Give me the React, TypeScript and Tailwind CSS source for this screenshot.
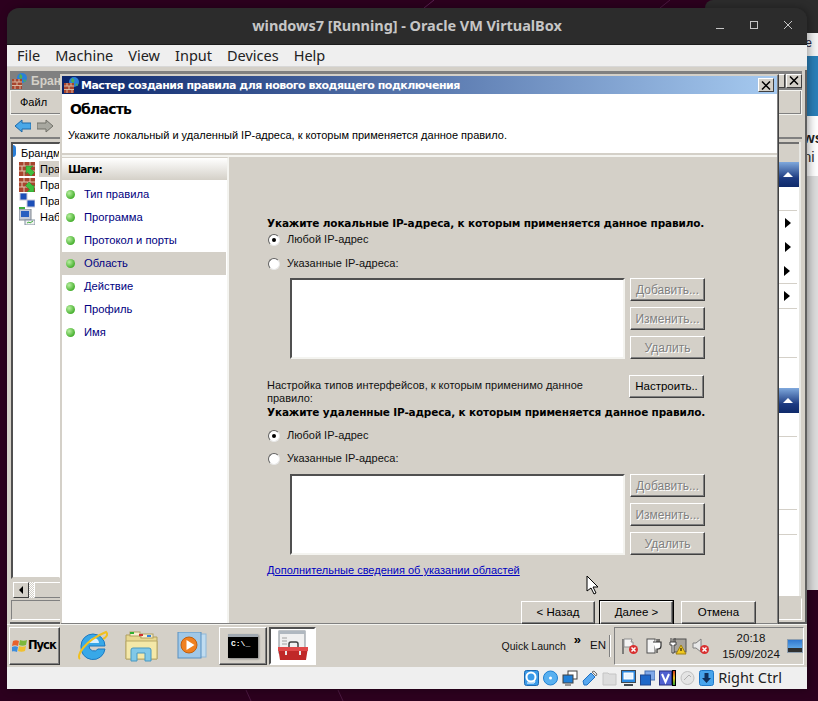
import React from "react";

const tahoma = "font-['Liberation_Sans','Noto_Sans',sans-serif]";

// кнопка в стиле Windows Classic
const Btn = ({ children, disabled, def, className = "" }: { children: React.ReactNode; disabled?: boolean; def?: boolean; className?: string }) => (
  <div
    className={`h-[23px] flex items-center justify-center bg-[#d4d0c8] border border-t-white border-l-white border-r-[#404040] border-b-[#404040] shadow-[inset_-1px_-1px_0_#808080] ${
      disabled ? "text-[12px] text-[#808080] [text-shadow:1px_1px_0_#fff]" : "text-[11.500px] text-black"
    } ${def ? "outline outline-1 outline-black" : ""} ${className}`}
  >
    {children}
  </div>
);

const Radio = ({ checked, label }: { checked?: boolean; label: string }) => (
  <div className="flex items-center h-[13px] gap-[7px] ml-[1px]">
    <div className="w-[12px] h-[12px] rounded-full bg-white border border-t-[#606060] border-l-[#606060] border-r-[#e8e8e8] border-b-[#e8e8e8] flex items-center justify-center">
      {checked && <div className="w-[4px] h-[4px] rounded-full bg-black" />}
    </div>
    <span className="text-[11px] text-[#111] leading-none">{label}</span>
  </div>
);

const Bricks = ({ down }: { down?: boolean }) => (
  <svg width="16" height="14" viewBox="0 0 16 14" className="shrink-0">
    <rect width="16" height="14" fill="#a8452e" />
    <path d="M0 4h16M0 9h16M5 0v4M11 0v4M3 4v5M9 4v5M5 9v5M12 9v5" stroke="#e0c8b0" strokeWidth="1" />
    <path d={down ? "M15 14H8l2.500-2.500-4-4L10 4l4 4 1-1z" : "M7 4h7l-2.500 2.500 4 4-3.500 3.500-4-4L7 12z"} fill="#3fbf3f" stroke="#2a8a2a" strokeWidth="0.500" />
  </svg>
);

const Net = () => (
  <svg width="16" height="16" viewBox="0 0 16 16" className="shrink-0">
    <rect x="1" y="0" width="7" height="7" fill="#1c4fb8" stroke="#c8c8d8" />
    <rect x="8" y="7" width="8" height="7" fill="#1c4fb8" stroke="#c8c8d8" />
    <path d="M0 14h6v2H0z" fill="#3fae3f" />
  </svg>
);

const Monitor = () => (
  <svg width="16" height="16" viewBox="0 0 16 16" className="shrink-0">
    <rect x="0" y="0" width="12" height="11" fill="#c8ccd8" stroke="#808890" />
    <rect x="2" y="2" width="8" height="6" fill="#2a5fc0" />
    <rect x="6" y="11" width="10" height="5" fill="#f0f0f0" stroke="#8090a0" />
    <path d="M8 14l2-1 1 1 3-2" stroke="#3fae3f" fill="none" />
  </svg>
);

const Globe = ({ size = 16 }: { size?: number }) => (
  <svg width={size} height={size} viewBox="0 0 16 16" className="shrink-0">
    <circle cx="10" cy="5" r="5" fill="#2b7fd8" />
    <path d="M8 1c2 1 3 2 2 4s-2 0-3-1zM13 6l1 3-3-1z" fill="#4fb04f" />
    <rect x="0" y="6" width="10" height="10" fill="#a8452e" />
    <path d="M0 9h10M0 12.500h10M3 6v3M7 6v3M5 9v3.500M3 12.500V16M8 12.500V16" stroke="#d8b8a0" />
  </svg>
);

const StepDot = () => (
  <div className="w-[9px] h-[9px] rounded-full bg-[radial-gradient(circle_at_35%_35%,#b8f0a0,#48b030_70%)]" />
);

const Step = ({ label, active }: { label: string; active?: boolean }) => (
  <div className={`h-[23px] flex items-center pl-[4px] gap-[9px] ${active ? "bg-[#d4d0c8] mr-[1px]" : ""}`}>
    <StepDot />
    <span className="text-[11.200px] text-[#000080] leading-none">{label}</span>
  </div>
);

const AddressBlock = () => (
  <div className="flex ml-[23px] gap-[5px]">
    <div className="w-[335px] h-[81px] bg-white border-2 border-t-[#505050] border-l-[#505050] border-r-[#f4f4f0] border-b-[#f4f4f0]" />
    <div className="flex flex-col gap-[6px]">
      <Btn disabled className="w-[75px]">Добавить...</Btn>
      <Btn disabled className="w-[75px]">Изменить...</Btn>
      <Btn disabled className="w-[75px]">Удалить</Btn>
    </div>
  </div>
);

const Tri = () => <div className="w-0 h-0 border-y-[5px] border-y-transparent border-l-[6px] border-l-black" />;

const BlueHead = ({ className = "" }: { className?: string }) => (
  <div className={`h-[25px] shrink-0 flex items-center justify-center bg-[linear-gradient(#7fa8dc,#1c3a80_65%,#0f2a6a)] ${className}`}>
    <div className="w-0 h-0 border-x-[5px] border-x-transparent border-b-[5px] border-b-white" />
  </div>
);

const Wizard = () => (
  <div className="absolute left-[53px] top-[7px] w-[719px] h-[551px] flex flex-col bg-[#d4d0c8] border border-t-[#d4d0c8] border-l-[#d4d0c8] border-r-[#404040] border-b-[#404040] p-[1px] shadow-[inset_-1px_-1px_0_#808080]">
    <div className="h-[18px] shrink-0 flex items-center pl-[2px] pr-[3px] bg-[linear-gradient(90deg,#0a246a,#a6caf0)]">
      <Globe size={16} />
      <span className="ml-[1px] text-[11px] font-bold text-white font-['DejaVu_Sans',sans-serif] tracking-[-0.5px] leading-none">Мастер создания правила для нового входящего подключения</span>
      <div className="ml-auto w-[16px] h-[14px] bg-[#d4d0c8] border border-t-white border-l-white border-r-[#404040] border-b-[#404040] flex items-center justify-center">
        <svg width="10" height="9" viewBox="0 0 10 9"><path d="M1 0.500l8 8M9 0.500l-8 8" stroke="#000" strokeWidth="1.500" /></svg>
      </div>
    </div>
    <div className="h-[61px] shrink-0 bg-white pl-[6px] border-b-2 border-b-[#d4d0c8]">
      <div className="mt-[6px] ml-[2px] text-[14px] leading-[18px] font-bold text-black font-['DejaVu_Sans',sans-serif] tracking-[-0.8px]">Область</div>
      <div className="mt-[10px] text-[11px] leading-[14px] text-black">Укажите локальный и удаленный IP-адреса, к которым применяется данное правило.</div>
    </div>
    <div className="flex flex-1 min-h-0 border-t-2 border-t-[#f4f4f0]">
      <div className="w-[167px] shrink-0 bg-white flex flex-col border-r-2 border-r-[#f4f4f0] border-t border-t-[#d4d0c8]">
        <div className="h-[22px] pl-[6px] pt-[1px] flex items-center bg-[linear-gradient(#fff,#d4d0c8)] text-[10.500px] font-bold text-black font-['DejaVu_Sans',sans-serif] tracking-[-0.6px]">Шаги:</div>
        <div className="flex flex-col pt-[3px]">
          <Step label="Тип правила" />
          <Step label="Программа" />
          <Step label="Протокол и порты" />
          <Step label="Область" active />
          <Step label="Действие" />
          <Step label="Профиль" />
          <Step label="Имя" />
        </div>
      </div>
      <div className="relative flex-1 pl-[38px] pt-[59px] flex flex-col">
        <div className="text-[10.500px] leading-[14px] font-bold text-black font-['DejaVu_Sans',sans-serif] tracking-[-0.15px]">Укажите локальные IP-адреса, к которым применяется данное правило.</div>
        <div className="mt-[3px]"><Radio checked label="Любой IP-адрес" /></div>
        <div className="mt-[11px]"><Radio label="Указанные IP-адреса:" /></div>
        <div className="mt-[8px]"><AddressBlock /></div>
        <div className="flex h-[26px] mt-[16px] justify-between w-[437px]">
          <div className="w-[345px] text-[11px] leading-[13px] text-[#111] pt-[4px]">Настройка типов интерфейсов, к которым применимо данное правило:</div>
          <Btn className="w-[75px]">Настроить..</Btn>
        </div>
        <div className="mt-[4px] text-[10.500px] leading-[14px] font-bold text-black font-['DejaVu_Sans',sans-serif] tracking-[-0.15px]">Укажите удаленные IP-адреса, к которым применяется данное правило.</div>
        <div className="mt-[10px]"><Radio checked label="Любой IP-адрес" /></div>
        <div className="mt-[10px]"><Radio label="Указанные IP-адреса:" /></div>
        <div className="mt-[9px]"><AddressBlock /></div>
        <div className="mt-[8px] text-[11px] leading-[14px] text-[#0000c0] underline">Дополнительные сведения об указании областей</div>
        <div className="flex justify-end mt-[24px] pr-[21px]">
          <Btn className="w-[74px]">&lt; Назад</Btn>
          <Btn def className="w-[73px] ml-[5px] mr-[8px]">Далее &gt;</Btn>
          <Btn className="w-[75px]">Отмена</Btn>
        </div>
      </div>
    </div>
  </div>
);

// окно консоли позади мастера
const Mmc = () => (
  <div className="flex-1 min-h-0 pl-[3px] pt-[3px]">
    <div className="h-full flex flex-col border-r-2 border-r-[#606060] border-b-2 border-b-[#606060] pr-[3px]">
      <div className="h-[19px] shrink-0 flex items-center pl-[2px] bg-[#808080] mt-[1px]">
        <Globe />
        <span className="ml-[3px] text-[12px] font-bold text-[#d4d0c8]">Бран</span>
        <div className="ml-auto flex gap-[1px]">
          <div className="w-[16px] h-[14px] bg-[#d4d0c8] border border-t-white border-l-white border-r-[#404040] border-b-[#404040]" />
          <div className="w-[16px] h-[14px] bg-[#d4d0c8] border border-t-white border-l-white border-r-[#404040] border-b-[#404040] flex items-center justify-center">
            <svg width="10" height="9" viewBox="0 0 10 9"><path d="M1 0.500l8 8M9 0.500l-8 8" stroke="#000" strokeWidth="1.500" /></svg>
          </div>
        </div>
      </div>
      <div className="h-[25px] shrink-0 flex items-center pl-[9px] border border-[#f4f4f0] shadow-[inset_-1px_-1px_0_#808080] text-[11px] text-black">Файл</div>
      <div className="h-[24px] shrink-0 flex items-center pl-[5px] gap-[6px] border-b-2 border-b-[#808080]">
        <svg width="16" height="14" viewBox="0 0 16 14"><path d="M0 7l7-6v3h9v6H7v3z" fill="#4aa8e8" stroke="#1c68a8" /></svg>
        <svg width="16" height="14" viewBox="0 0 16 14"><path d="M16 7L9 1v3H0v6h9v3z" fill="#a8a8a0" stroke="#707068" /></svg>
      </div>
      <div className="flex flex-1 min-h-0 mt-[3px] ml-[1px] justify-between">
        <div className="w-[50px] flex flex-col">
          <div className="relative flex-1 bg-white border-2 border-t-[#505050] border-l-[#505050] border-r-white border-b-[#d4d0c8] pl-[1px] pt-[1px] text-[11px] text-black overflow-hidden">
            <div className="absolute left-[-4px] top-[1px] w-[7px] h-[12px] rounded-full bg-[#2b7fd8]" />
            <div className="flex items-center h-[16px] whitespace-nowrap pl-[7px]">Брандм</div>
            <div className="flex items-center h-[16px] pl-[5px] gap-[4px] whitespace-nowrap"><Bricks /><span className="bg-[#d4d0c8] px-[1px]">Пра</span></div>
            <div className="flex items-center h-[16px] pl-[5px] gap-[5px] whitespace-nowrap"><Bricks down /><span>Пра</span></div>
            <div className="flex items-center h-[16px] pl-[5px] gap-[5px] whitespace-nowrap"><Net /><span>Пра</span></div>
            <div className="flex items-center h-[16px] pl-[5px] gap-[5px] whitespace-nowrap"><Monitor /><span>Наб</span></div>
          </div>
          <div className="h-[21px] shrink-0 flex items-center bg-[#d4d0c8]">
            <div className="w-[16px] h-[16px] ml-[2px] flex items-center justify-center border border-t-white border-l-white border-r-[#404040] border-b-[#404040]">
              <div className="w-0 h-0 border-y-[4px] border-y-transparent border-r-[4px] border-r-black" />
            </div>
            <div className="w-[5px] h-[16px] bg-[repeating-conic-gradient(#fff_0_25%,#d4d0c8_0_50%)] bg-[length:2px_2px]" />
            <div className="flex-1 h-[16px] border border-t-white border-l-white border-b-[#808080]" />
          </div>
          <div className="h-[20px] shrink-0 mb-[2px] border border-t-[#808080] border-l-[#808080] border-b-white" />
        </div>
        <div className="w-[26px] flex flex-col">
          <div className="flex-1 bg-white border-r-2 border-r-[#e8e8e4] mr-[1px] flex flex-col">
            <div className="h-[20px] shrink-0 bg-[#d4d0c8] border-t-2 border-t-[#707070]" />
            <BlueHead />
            <div className="h-[24px] shrink-0 border-b border-b-[#d4d0c8] mr-[2px]" />
            <div className="h-[24px] shrink-0 flex items-center justify-center"><Tri /></div>
            <div className="h-[24px] shrink-0 flex items-center justify-center"><Tri /></div>
            <div className="h-[25px] shrink-0 flex items-center justify-center border-b border-b-[#d4d0c8] mr-[2px]"><Tri /></div>
            <div className="h-[25px] shrink-0 flex items-center justify-center border-b border-b-[#d4d0c8] mr-[2px]"><Tri /></div>
            <div className="h-[49px] shrink-0 border-b border-b-[#d4d0c8] mr-[2px]" />
            <div className="h-[30px] shrink-0" />
            <BlueHead />
            <div className="h-[24px] shrink-0 border-b border-b-[#d4d0c8] mr-[2px]" />
            <div className="h-[73px] shrink-0 border-b border-b-[#d4d0c8] mr-[2px]" />
            <div className="h-[25px] shrink-0 border-b border-b-[#d4d0c8] mr-[2px]" />
          </div>
          <div className="h-[22px] shrink-0 mt-[2px] mb-[2px] border border-r-white border-b-white border-t-[#d4d0c8] border-l-[#d4d0c8]" />
        </div>
      </div>
    </div>
  </div>
);

const TrayIcon = ({ children, w = 18 }: { children: React.ReactNode; w?: number }) => (
  <svg width={w} height="18" viewBox="0 0 18 18" className="shrink-0">{children}</svg>
);

const ErrBadge = () => (
  <>
    <circle cx="12.500" cy="12.500" r="4.500" fill="#d83030" />
    <path d="M10.500 10.500l4 4M14.500 10.500l-4 4" stroke="#fff" strokeWidth="1.500" />
  </>
);

const Taskbar = () => (
  <div className="h-[43px] shrink-0 flex items-center border-t border-t-[#f4f4f0] pl-[2px] relative">
    <div className="w-[51px] h-[38px] flex items-center pl-[2px] bg-[#d4d0c8] border border-t-white border-l-white border-r-[#404040] border-b-[#404040] shadow-[inset_-1px_-1px_0_#808080]">
      <svg width="16" height="14" viewBox="0 0 16 14" className="shrink-0">
        <path d="M1 2c2-1 4-1 6 0l-1 5c-2-1-4-1-6 0z" fill="#e8622c" />
        <path d="M8 1c2 1 5 1 7 0l-1 5c-2 1-5 1-7 0z" fill="#7cb83c" />
        <path d="M0 8c2-1 4-1 6 0l-1 5c-2-1-4-1-6 0z" fill="#3c8cdc" />
        <path d="M7 7c2 1 5 1 7 0l-1 5c-2 1-5 1-7 0z" fill="#f0c030" />
      </svg>
      <span className="text-[11.500px] font-bold text-black font-['DejaVu_Sans',sans-serif] tracking-[-1px]">Пуск</span>
    </div>
    <svg width="32" height="32" viewBox="0 0 32 32" className="ml-[16px] shrink-0">
      <path d="M5 16a12 12 0 1 1 24 0H13a5 5 0 0 0 9 3h7a12 12 0 0 1-24-3z" fill="#38a8e8" stroke="#1c78c0" />
      <path d="M13 13h10a5 5 0 0 0-10 0z" fill="#d8f0ff" />
      <path d="M4 29c-4-3 4-18 26-27 3 3-1 6-3 7" fill="none" stroke="#f0c020" strokeWidth="2" />
    </svg>
    <svg width="34" height="32" viewBox="0 0 34 32" className="ml-[17px] shrink-0">
      <path d="M1 5h12l2 2h17v22H1z" fill="#e8d890" stroke="#b0a060" />
      <rect x="5" y="2" width="10" height="4" fill="#f8f0d0" stroke="#b0a060" />
      <rect x="16" y="4" width="12" height="4" fill="#f8f0d0" stroke="#b0a060" />
      <path d="M5 2h4v2H5z" fill="#30b030" /><path d="M14 4h4v2h-4z" fill="#d03030" /><path d="M22 5h4v2h-4z" fill="#3080e0" />
      <path d="M1 11h31v18H1z" fill="#f4e8a8" stroke="#b8a868" />
      <path d="M6 31V20a2 2 0 0 1 2-2h16a2 2 0 0 1 2 2v11h-6v-8h-8v8z" fill="#80c8e8" stroke="#4898c0" />
    </svg>
    <svg width="32" height="28" viewBox="0 0 32 28" className="ml-[18px] shrink-0">
      <rect x="8" y="2" width="21" height="23" fill="#c0dcf0" stroke="#90b8d8" />
      <rect x="1" y="0" width="23" height="26" fill="#a0c8e8" stroke="#5890c0" />
      <circle cx="12" cy="13" r="8" fill="#f08020" stroke="#c06010" />
      <path d="M9.500 8l8 5-8 5z" fill="#fff" />
    </svg>
    <div className="ml-[10px] w-[48px] h-[38px] flex items-center justify-center bg-[#d4d0c8] border border-t-white border-l-white border-r-[#404040] border-b-[#404040] shadow-[inset_-1px_-1px_0_#808080]">
      <div className="w-[30px] h-[24px] bg-black border-t-[3px] border-t-[#a0a8b0] shadow-[1px_1px_2px_#808080] pl-[3px] pt-[3px] text-[8px] leading-none text-white font-['Liberation_Mono',monospace] font-bold">C:\_</div>
    </div>
    <div className="ml-[2px] w-[47px] h-[38px] flex items-center justify-center bg-white border-2 border-t-[#505050] border-l-[#505050] border-r-white border-b-white">
      <svg width="34" height="32" viewBox="0 0 34 32">
        <rect x="3" y="1" width="26" height="22" fill="#f0f0f0" stroke="#808890" />
        <rect x="3" y="1" width="26" height="3" fill="#b0b8c0" />
        <path d="M6 8h5M6 11h5M6 14h5" stroke="#a0a0a0" />
        <path d="M13 17v-3a2 2 0 0 1 2-2h5a2 2 0 0 1 2 2v3" fill="none" stroke="#404040" strokeWidth="1.500" />
        <path d="M2 17h30l-2 13H4z" fill="#c02828" />
        <path d="M2 17h30v4H2z" fill="#e04848" />
        <rect x="9" y="21" width="2" height="4" fill="#e8e8e8" /><rect x="23" y="21" width="2" height="4" fill="#e8e8e8" />
      </svg>
    </div>
    <div className="ml-auto flex items-center h-full">
      <span className="text-[10.500px] text-[#111] mt-[1px] mr-[8px]">Quick Launch</span>
      <span className="text-[13px] font-bold text-black -mt-[14px] mr-[9px] leading-none">»</span>
      <span className="text-[11.500px] text-[#111] mr-[3px]">EN</span>
      <div className="w-[2px] h-[22px] bg-[#808080] border-r border-r-white mr-[3px]" />
      <div className="w-[190px] h-[38px] mr-[3px] flex items-center pl-[6px] border border-t-[#808080] border-l-[#808080] border-r-white border-b-white">
        <TrayIcon w={18}>
          <path d="M2 2v15" stroke="#606060" strokeWidth="1.500" /><path d="M3 2h8l-1 3h2v5H3z" fill="#f4f4f4" stroke="#909090" /><ErrBadge />
        </TrayIcon>
        <div className="ml-[6px]">
          <TrayIcon>
            <rect x="2" y="2" width="8" height="14" fill="#f4f4f4" stroke="#505050" /><path d="M9 5h3V2M14 5V2M8 5h8v4a3 3 0 0 1-3 3h-1v4" fill="#fff" stroke="#303030" strokeWidth="1.200" />
          </TrayIcon>
        </div>
        <div className="ml-[6px]">
          <TrayIcon>
            <rect x="4" y="2" width="13" height="13" fill="#a8a49c" stroke="#505050" /><path d="M2 1v4M6 1v4M1 5h6v3H5v8H3V8H1z" fill="#fff" stroke="#404040" /><path d="M12 8l5 9H7z" fill="#f0c820" stroke="#a08010" /><path d="M12 11v3" stroke="#000" />
          </TrayIcon>
        </div>
        <div className="ml-[5px]">
          <TrayIcon>
            <path d="M1 6h3l5-4v13l-5-4H1z" fill="#e8e8e8" stroke="#808080" /><ErrBadge />
          </TrayIcon>
        </div>
        <div className="ml-[10px] w-[62px] text-center text-[11.500px] leading-[16px] text-[#111]">
          <div>20:18</div>
          <div className="whitespace-nowrap">15/09/2024</div>
        </div>
        <div className="ml-auto w-[16px] h-[14px] bg-[linear-gradient(#3078d0,#60a8e8_70%,#303030_70%)] border border-[#90a0b0]" />
      </div>
    </div>
  </div>
);

const StatusIcons = () => (
  <div className="flex items-center gap-[4px] mr-[4px]">
    <svg width="15" height="16" viewBox="0 0 15 16"><rect x=".5" y=".5" width="14" height="15" rx="2" fill="#3a9ae8" stroke="#1c68b0" /><circle cx="7" cy="7" r="4.500" fill="none" stroke="#fff" strokeWidth="2" /><path d="M3 13h7l1-2" stroke="#fff" fill="none" /></svg>
    <svg width="15" height="16" viewBox="0 0 15 16"><circle cx="7.500" cy="8" r="7" fill="#58b0f0" stroke="#2080d0" /><circle cx="7.500" cy="8" r="1.500" fill="#fff" /></svg>
    <svg width="16" height="16" viewBox="0 0 16 16"><rect x="6" y="1" width="9" height="8" fill="#fff" stroke="#404040" /><rect x="1" y="5" width="10" height="8" fill="#2080d8" stroke="#404040" /><path d="M3 15h6" stroke="#404040" /></svg>
    <svg width="16" height="16" viewBox="0 0 16 16"><path d="M1 11L9 3l4 4-8 8H2z" fill="#58a8f0" stroke="#2070c0" /><path d="M10 2l2-1 3 3-1 2z" fill="#e8e8e8" stroke="#707070" /></svg>
    <svg width="15" height="16" viewBox="0 0 15 16"><path d="M1 3h5l1 1h7v11H1z" fill="#dcdcdc" stroke="#c4c4c4" /></svg>
    <svg width="15" height="16" viewBox="0 0 15 16"><rect x=".5" y=".5" width="14" height="12" fill="#2a88e0" stroke="#404850" /><rect x="3" y="3" width="9" height="6" fill="#e8f4ff" stroke="#fff" /><path d="M3 15h9" stroke="#404850" strokeWidth="2" /></svg>
    <svg width="15" height="16" viewBox="0 0 15 16"><rect x="5" y="1" width="10" height="9" fill="#80a8e8" stroke="#4870b0" /><rect x="0.500" y="5" width="10" height="10" fill="#2068c8" stroke="#204890" /></svg>
    <div className="flex items-center">
      <svg width="13" height="16" viewBox="0 0 13 16"><rect x=".5" y="1" width="12" height="14" fill="#5060d0" stroke="#283080" /><path d="M3 4l3.500 8L10 4" fill="none" stroke="#fff" strokeWidth="2" /></svg>
      <div className="w-[4px] h-[16px] bg-[linear-gradient(#d03020,#e8c020,#30a030)] border border-black" />
    </div>
    <svg width="15" height="16" viewBox="0 0 15 16"><circle cx="7.500" cy="8" r="6.500" fill="#e4e4e4" stroke="#c0c0c0" /><path d="M4 10l5-5 2 2" fill="none" stroke="#b0b0b0" /></svg>
    <svg width="15" height="16" viewBox="0 0 15 16"><rect x=".5" y=".5" width="14" height="15" rx="2" fill="#48a4ec" stroke="#2078c8" /><path d="M5.500 3h4v5h2.500l-4.500 5L3 8h2.500z" fill="#10305c" /></svg>
  </div>
);

export default function App() {
  return (
    <div className={`relative w-[818px] h-[701px] overflow-hidden bg-[#2c001e] ${tahoma}`}>
      <svg className="absolute inset-0" width="818" height="701" viewBox="0 0 818 701">
        <path d="M424 8l10-8" stroke="#5a2050" strokeWidth="1" />
        <path d="M246 690l5 11M338 690l5 11" stroke="#4a1840" strokeWidth="1" />
        <path d="M660 8l10-8" stroke="#4a1840" strokeWidth="1" />
      </svg>
      {/* окно браузера позади */}
      <div className="absolute left-[705px] top-0 w-[113px] h-[590px] rounded-tl-[14px] bg-[#dcdcdc]">
        <div className="h-[8px] rounded-tl-[14px] bg-[#2c2c2c]" />
        <div className="h-[25px] bg-[#2c2c2c]" />
        <div className="h-[23px] bg-[#f4f4f4] text-right text-[12px] pr-[6px] leading-[20px] text-[#224]">e</div>
        <div className="h-[60px] bg-[#2a7fb8]" />
        <div className="h-[60px] bg-white pl-[98px] pt-[12px] text-[15px] leading-[19px] whitespace-nowrap">
          <div className="font-bold text-[#222]">ws</div>
          <div className="text-[#333]">ni</div>
        </div>
      </div>

      {/* окно VirtualBox */}
      <div className="absolute left-[7px] top-[8px] w-[800px] h-[681px] flex flex-col rounded-t-[12px] shadow-[2px_0_8px_rgba(0,0,0,0.35)]">
        <div className="relative h-[37px] shrink-0 flex items-center justify-center rounded-t-[12px] bg-[#2c2c2c] border-b border-b-[#1c1c1c]">
          <span className="text-[14.500px] font-bold text-[#c6c6c6] font-['Noto_Sans',sans-serif] tracking-[-0.05px]">windows7 [Running] - Oracle VM VirtualBox</span>
          <div className="absolute right-[14px] top-[13px] flex items-center gap-[24px]">
            <svg width="10" height="10" viewBox="0 0 10 10"><path d="M1 7.500h8" stroke="#c6c6c6" /></svg>
            <svg width="10" height="10" viewBox="0 0 10 10"><rect x="1.500" y=".5" width="7" height="7" fill="none" stroke="#c6c6c6" /></svg>
            <svg width="10" height="10" viewBox="0 0 10 10"><path d="M1 0l8 8M9 0l-8 8" stroke="#c6c6c6" /></svg>
          </div>
        </div>
        <div className="h-[21px] shrink-0 flex items-center pl-[10px] gap-[15px] bg-[#efefef] text-[14.500px] text-[#222] font-['Noto_Sans',sans-serif]">
          <span>File</span><span>Machine</span><span>View</span><span>Input</span><span>Devices</span><span>Help</span>
        </div>
        <div className="relative flex-1 min-h-0 flex flex-col bg-[#d4d0c8] border-t-[1px] border-t-[#d8d8d8]">
          <Mmc />
          <Wizard />
          <Taskbar />
        </div>
        <div className="h-[22px] shrink-0 flex items-center justify-end pr-[25px] bg-[#efefef]">
          <StatusIcons />
          <span className="text-[14.500px] text-[#222] font-['Noto_Sans',sans-serif]">Right Ctrl</span>
        </div>
      </div>

      {/* курсор */}
      <svg className="absolute left-[586px] top-[575px]" width="13" height="21" viewBox="0 0 13 21">
        <path d="M1 1v15l4-3 3 6 2-1-3-6h5z" fill="#fff" stroke="#000" />
      </svg>
    </div>
  );
}
